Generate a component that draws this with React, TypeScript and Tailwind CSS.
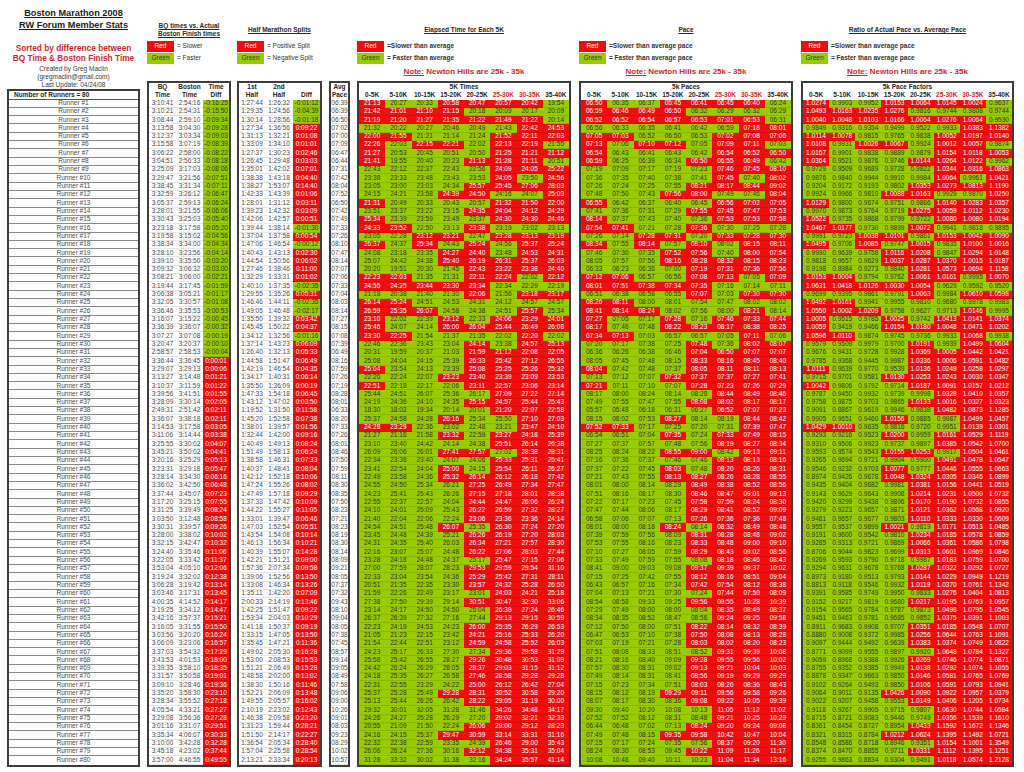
import React from 'react';

// --- data -------------------------------------------------------------

function rng(seed: number) {
  let a = seed;
  return () => {
    a |= 0;
    a = (a + 0x6d2b79f5) | 0;
    let t = Math.imul(a ^ (a >>> 15), 1 | a);
    t = (t + Math.imul(t ^ (t >>> 7), 61 | t)) ^ t;
    return ((t ^ (t >>> 14)) >>> 0) / 4294967296;
  };
}
const rand = rng(2008);

const p = (s: string) => s.split(':').reduce((acc, x) => acc * 60 + Number(x), 0);
const KM5 = 3.10686;
const MI = 26.2188;

// BQ time, Boston time, 1st half, 2nd half
const known: Record<number, [string, string, string, string]> = {
  1: ['3:10:41', '2:54:16', '1:27:44', '1:26:32'],
  2: ['3:10:21', '2:54:31', '1:29:35', '1:24:56'],
  3: ['3:08:44', '2:59:10', '1:30:14', '1:28:56'],
  4: ['3:13:58', '3:04:30', '1:27:34', '1:36:56'],
  5: ['3:12:37', '3:03:34', '1:31:13', '1:32:21'],
  6: ['3:15:58', '3:07:19', '1:33:09', '1:34:10'],
  7: ['3:06:22', '2:58:00', '1:27:37', '1:30:23'],
  8: ['3:04:51', '2:56:33', '1:26:45', '1:29:48'],
  9: ['3:25:09', '3:17:03', '1:35:01', '1:42:02'],
  10: ['3:29:47', '3:21:56', '1:38:38', '1:43:18'],
  11: ['3:38:45', '3:31:34', '1:38:27', '1:53:07'],
  19: ['3:28:10', '3:23:56', '1:40:43', '1:43:13'],
  20: ['3:39:10', '3:35:50', '1:44:54', '1:50:56'],
  21: ['3:09:32', '3:06:32', '1:27:46', '1:38:46'],
  22: ['3:08:21', '3:06:00', '1:32:29', '1:33:31'],
  23: ['3:19:44', '3:17:45', '1:40:10', '1:37:35'],
  24: ['3:06:38', '3:05:21', '1:29:55', '1:35:26'],
  30: ['3:20:47', '3:20:37', '1:37:14', '1:43:23'],
  31: ['2:58:57', '2:58:53', '1:26:40', '1:32:13'],
  32: ['3:36:44', '3:36:45', '1:44:58', '1:51:47'],
  33: ['3:29:07', '3:29:13', '1:42:19', '1:46:54'],
  34: ['3:13:27', '3:14:48', '1:34:17', '1:40:31'],
  35: ['3:10:37', '3:11:59', '1:35:50', '1:36:09'],
  36: ['3:39:56', '3:41:51', '1:47:33', '1:54:18'],
  37: ['3:28:09', '3:30:14', '1:43:12', '1:47:02'],
  38: ['2:49:31', '2:51:42', '1:19:52', '1:31:50'],
  39: ['3:36:07', '3:38:18', '1:45:20', '1:52:58'],
  40: ['3:14:53', '3:17:58', '1:38:01', '1:39:57'],
  71: ['3:09:10', '3:28:46', '1:38:30', '1:50:16'],
  72: ['3:35:20', '3:58:30', '1:52:21', '2:06:09'],
  73: ['3:28:34', '3:55:52', '1:49:55', '2:05:57'],
  74: ['4:05:54', '4:33:21', '2:10:19', '2:23:02'],
  75: ['3:29:08', '3:56:36', '1:46:38', '2:09:58'],
  76: ['3:01:16', '3:31:07', '1:31:23', '1:59:44'],
  77: ['3:35:34', '4:06:07', '1:51:50', '2:14:17'],
  78: ['3:10:00', '3:42:28', '1:36:54', '2:05:34'],
  79: ['3:45:18', '4:23:02', '1:57:04', '2:25:58'],
  80: ['3:57:00', '4:46:55', '2:13:21', '2:33:34'],
};

const known5k: Record<number, string> = {
  1: '21:13 20:27 20:33 20:58 20:47 20:57 20:42 19:54',
  2: '21:42 21:01 21:10 21:15 20:18 20:09 20:17 20:09',
  3: '21:19 21:20 21:27 21:35 21:22 21:49 21:22 20:14',
  4: '21:32 20:22 20:27 20:46 20:49 21:43 22:42 24:53',
  71: '22:31 22:55 23:29 24:22 25:00 26:12 26:42 27:04',
  72: '25:37 25:28 25:49 29:28 28:31 30:52 30:58 29:20',
  73: '25:13 25:44 26:26 26:42 28:22 29:05 31:19 30:00',
  74: '29:32 30:01 32:05 31:28 31:46 34:26 34:48 34:17',
  75: '24:26 24:27 25:28 26:29 27:20 29:02 32:21 32:33',
  76: '20:55 21:09 21:50 22:24 26:06 29:00 29:12 28:23',
  77: '24:16 24:15 25:37 29:47 30:59 33:14 33:31 31:16',
  78: '22:32 22:38 22:59 23:35 24:39 26:46 29:00 35:43',
  79: '26:06 26:24 27:36 30:16 32:12 34:38 35:31 35:04',
  80: '31:28 33:32 30:02 31:38 32:16 34:24 35:57 41:14',
};

const pad = (n: number) => String(n).padStart(2, '0');
const hms = (s: number) => {
  const a = Math.abs(Math.round(s));
  return `${s < 0 ? '-' : ''}${Math.floor(a / 3600)}:${pad(Math.floor((a % 3600) / 60))}:${pad(a % 60)}`;
};
const ms = (s: number) => {
  const a = Math.round(s);
  return `${pad(Math.floor(a / 60))}:${pad(a % 60)}`;
};

type Tone = 'r' | 'g' | 'w';
type C = { v: string; t: Tone };

type Row = { bq: number; b: number; h1: number; h2: number; f: number[]; avg: number };

const diffOf = (i: number) => p(known[i][1]) - p(known[i][0]);

const rows: Row[] = [];
for (let i = 1; i <= 80; i++) {
  const k = known[i];
  let bq: number;
  let b: number;
  if (k) {
    bq = p(k[0]);
    b = p(k[1]);
  } else {
    let lo = i - 1;
    while (!known[lo]) lo--;
    let hi = i + 1;
    while (!known[hi]) hi++;
    const dl = diffOf(lo);
    const dh = diffOf(hi);
    const d = Math.round(dl + ((dh - dl) * (i - lo)) / (hi - lo) + (rand() - 0.5) * 6);
    bq = Math.round(3 * 3600 + rand() * 2700 + (rand() > 0.8 ? rand() * 1500 : 0));
    b = bq + d;
  }
  const avg = b / MI;
  let f: number[];
  if (known5k[i]) {
    f = known5k[i].split(' ').map((x) => p(x) / KM5 / avg);
  } else {
    let s: number;
    const d = b - bq;
    if (k) s = (p(k[3]) - p(k[2])) / (b / 2) / 1.14;
    else s = d < 0 ? -0.03 + rand() * 0.08 : 0.03 + (d / 3000) * 0.14 + rand() * 0.05;
    f = Array.from({ length: 8 }, (_, j) => 1 + (s * (j - 3.5)) / 3.5 + (rand() - 0.5) * 0.06);
    // crowded start: the first 5K tends to run slow for the faster half
    if (d < 200) f[0] += 0.03 + rand() * 0.02;
    const m = f.reduce((a, c) => a + c, 0) / 8;
    f = f.map((x) => x / m);
  }
  let h1: number;
  let h2: number;
  if (k) {
    h1 = p(k[2]);
    h2 = p(k[3]);
  } else {
    const sum = f.reduce((a, c) => a + c, 0);
    h1 = Math.round((b * (f[0] + f[1] + f[2] + f[3] + 0.22 * f[4])) / (sum + 0.439 * f[7]));
    h2 = b - h1;
  }
  rows.push({ bq, b, h1, h2, f, avg });
}

const bqRows: C[][] = rows.map((r) => [
  { v: hms(r.bq), t: 'w' },
  { v: hms(r.b), t: 'w' },
  { v: hms(r.b - r.bq), t: r.b - r.bq < 0 ? 'g' : 'r' },
]);
const halfRows: C[][] = rows.map((r) => [
  { v: hms(r.h1), t: 'w' },
  { v: hms(r.h2), t: 'w' },
  { v: hms(r.h2 - r.h1), t: r.h2 - r.h1 < 0 ? 'g' : 'r' },
]);
const avgRows: C[][] = rows.map((r) => [{ v: ms(r.avg), t: 'w' }]);
const timeRows: C[][] = rows.map((r) => r.f.map((x) => ({ v: ms(x * r.avg * KM5), t: x > 1 ? 'r' : 'g' })));
const paceRows: C[][] = rows.map((r) => r.f.map((x) => ({ v: ms(x * r.avg), t: x > 1 ? 'r' : 'g' })));
const factorRows: C[][] = rows.map((r) => r.f.map((x) => ({ v: x.toFixed(4), t: x > 1 ? 'r' : 'g' })));

const splits = ['0-5K', '5-10K', '10-15K', '15-20K', '20-25K', '25-30K', '30-35K', '35-40K'];

// --- pieces -----------------------------------------------------------

function Cell({ c }: { c: C }) {
  const tone =
    c.t === 'r'
      ? 'bg-[#f00d0d] text-white'
      : c.t === 'g'
        ? 'bg-[#99cc00] text-[#2e3320]'
        : 'bg-white text-[#4a4a4a]';
  return (
    <div className={`${tone} flex items-center justify-center border-b border-black/10 whitespace-nowrap overflow-hidden`}>
      {c.v}
    </div>
  );
}

function Table({
  w,
  grid,
  title,
  top,
  bottom,
  data,
}: {
  w: string;
  grid: string;
  title?: string;
  top?: string[];
  bottom: string[];
  data: C[][];
}) {
  return (
    <div className={`${w} border-2 border-[#3d3d3d] bg-white`}>
      <div className="h-[16.5px] flex flex-col font-bold text-[#262626]">
        {title ? (
          <div className="h-[7.5px] flex items-center justify-center">{title}</div>
        ) : (
          <div className={`grid ${grid} h-[7.5px]`}>
            {top!.map((l, i) => (
              <div key={i} className="flex items-center justify-center">
                {l}
              </div>
            ))}
          </div>
        )}
        <div className={`grid ${grid} h-[9px]`}>
          {bottom.map((l, i) => (
            <div
              key={i}
              className={`flex items-center justify-center whitespace-nowrap ${l === '25-30K' || l === '30-35K' ? 'text-[#e2202a]' : ''}`}
            >
              {l}
            </div>
          ))}
        </div>
      </div>
      {data.map((r, i) => (
        <div key={i} className={`grid ${grid} h-[8.32px]`}>
          {r.map((c, j) => (
            <Cell key={j} c={c} />
          ))}
        </div>
      ))}
    </div>
  );
}

function Legend({
  title,
  red,
  green,
  bold,
  note,
}: {
  title: React.ReactNode;
  red: string;
  green: string;
  bold?: boolean;
  note?: boolean;
}) {
  return (
    <div className="h-[81px] flex flex-col pt-[22px]">
      <div className="h-[16px] flex flex-col justify-center items-center font-bold underline leading-[8px] text-[#2a2a2a]">
        {title}
      </div>
      <div className={`mt-[3px] flex flex-col gap-[1px] text-[#333] ${bold ? 'font-bold' : ''}`}>
        <div className="h-[11px] flex items-center gap-[3px] whitespace-nowrap">
          <span className="w-[27px] h-full bg-[#f00d0d] text-white font-normal flex items-center justify-center">Red</span>
          {red}
        </div>
        <div className="h-[11px] flex items-center gap-[3px] whitespace-nowrap">
          <span className="w-[27px] h-full bg-[#99cc00] text-[#2e3320] font-normal flex items-center justify-center">
            Green
          </span>
          {green}
        </div>
      </div>
      {note && (
        <div className="mt-[3px] h-[10px] flex items-center justify-center text-[8px] font-bold text-[#d8262b] whitespace-nowrap">
          <span className="underline">Note:</span>&nbsp;Newton Hills are 25k - 35k
        </div>
      )}
    </div>
  );
}

function LeftColumn() {
  return (
    <div className="w-[133px] flex flex-col">
      <div className="h-[89px] flex flex-col items-center pt-[8px] whitespace-nowrap">
        <div className="h-[12px] flex items-center text-[9.2px] font-bold underline text-[#1e1e1e]">Boston Marathon 2008</div>
        <div className="h-[12px] flex items-center text-[9.2px] font-bold underline text-[#1e1e1e]">RW Forum Member Stats</div>
        <div className="mt-[10.5px] h-[10.5px] flex items-center text-[8.3px] font-bold text-[#d8262b]">
          Sorted by difference between
        </div>
        <div className="h-[10.5px] flex items-center text-[8.3px] font-bold text-[#d8262b]">BQ Time &amp; Boston Finish Time</div>
        <div className="mt-[1.5px] h-[8px] flex items-center text-[#3a3a3a]">Created by Greg Maclin</div>
        <div className="h-[8px] flex items-center text-[#3a3a3a]">(gregmaclin@gmail.com)</div>
        <div className="h-[8px] flex items-center text-[#3a3a3a]">Last Update: 04/24/08</div>
      </div>
      <div className="border-2 border-[#3d3d3d]">
        <div className="h-[8.5px] flex items-center pl-[5px] font-bold text-[#262626] border-b border-[#555]">
          Number of Runners = 80
        </div>
        {rows.map((_, i) => (
          <div
            key={i}
            className="h-[8.32px] flex items-center justify-center border-b border-[#8a8a8a] text-[#4a4a4a] last:border-b-0"
          >
            Runner #{i + 1}
          </div>
        ))}
      </div>
    </div>
  );
}

export default function App() {
  return (
    <div className="w-[1024px] h-[772px] overflow-hidden bg-white flex pl-[7px] text-[6.5px] leading-none font-['Liberation_Sans',Arial,sans-serif]">
      <LeftColumn />

      <div className="ml-[7px] w-[84px] flex flex-col">
        <Legend
          title={
            <>
              <span>BQ times vs. Actual</span>
              <span>Boston Finish times</span>
            </>
          }
          red="= Slower"
          green="= Faster"
        />
        <Table
          w="w-[84px]"
          grid="grid-cols-[27px_27px_26px]"
          top={['BQ', 'Boston', 'Time']}
          bottom={['Time', 'Time', 'Diff']}
          data={bqRows}
        />
      </div>

      <div className="ml-[6px] w-[85px] flex flex-col">
        <Legend title="Half Marathon Splits" red="= Positive Split" green="= Negative Split" />
        <Table
          w="w-[85px]"
          grid="grid-cols-[26px_28px_27px]"
          top={['1st', '2nd', '']}
          bottom={['Half', 'Half', 'Diff']}
          data={halfRows}
        />
      </div>

      <div className="ml-[7px] w-[21px] flex flex-col">
        <div className="h-[81px]" />
        <Table w="w-[21px]" grid="grid-cols-1" top={['Avg']} bottom={['Pace']} data={avgRows} />
      </div>

      <div className="ml-[7px] w-[214px] flex flex-col">
        <Legend
          title="Elapsed Time for Each 5K"
          red="=Slower than average"
          green="= Faster than average"
          bold
          note
        />
        <Table w="w-[214px]" grid="grid-cols-8" title="5K Times" bottom={splits} data={timeRows} />
      </div>

      <div className="ml-[8px] w-[214px] flex flex-col">
        <Legend title="Pace" red="=Slower than average pace" green="= Faster than average pace" bold note />
        <Table w="w-[214px]" grid="grid-cols-8" title="5k Paces" bottom={splits} data={paceRows} />
      </div>

      <div className="ml-[8px] w-[213px] flex flex-col">
        <Legend
          title="Ratio of Actual Pace vs. Average Pace"
          red="=Slower than average pace"
          green="= Faster than average pace"
          bold
          note
        />
        <Table w="w-[213px]" grid="grid-cols-8" title="5k Pace Factors" bottom={splits} data={factorRows} />
      </div>
    </div>
  );
}
